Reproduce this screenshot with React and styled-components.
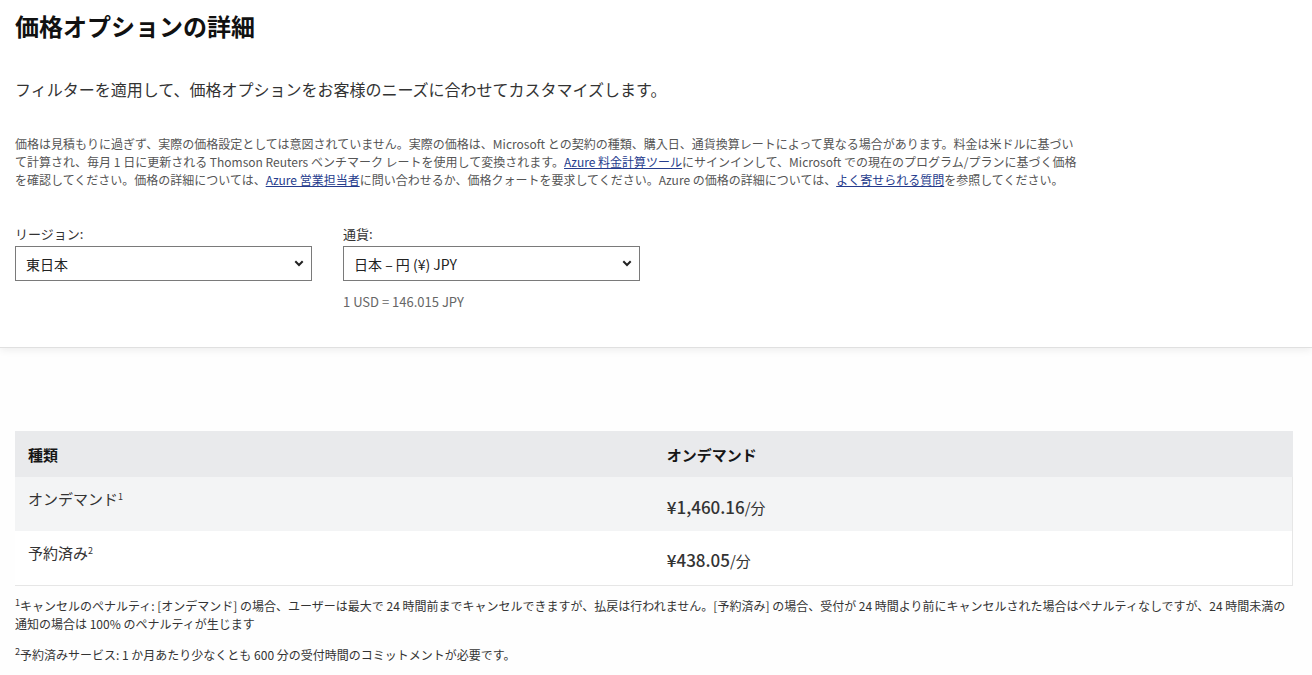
import styled, { createGlobalStyle } from "styled-components";

const Global = createGlobalStyle`
  html, body {
    margin: 0;
    padding: 0;
    background: #fefefe;
    font-family: "Noto Sans CJK JP", "Noto Sans", sans-serif;
    color: #333;
  }
`;

const Style = {
  TopSection: styled.section`
    background: #fff;
    padding: 8px 15px 36px;
    box-shadow: 0 1px 0 #e0e0e0, 0 3px 8px rgba(0, 0, 0, 0.07);
    position: relative;
  `,
  Title: styled.h1`
    margin: 0;
    font-size: 24px;
    line-height: 36px;
    font-weight: 700;
    color: #111;
  `,
  Lead: styled.p`
    margin: 33px 0 0;
    font-size: 16px;
    line-height: 24px;
    color: #333;
  `,
  Disclaimer: styled.p`
    margin: 34px 0 0;
    width: 1064px;
    font-size: 12px;
    line-height: 18px;
    color: #555;
  `,
  Link: styled.a`
    color: #263c8d;
    text-decoration: underline;
  `,
  Filters: styled.div`
    display: flex;
    gap: 31px;
    margin-top: 36px;
  `,
  Field: styled.div`
    width: 297px;
    display: flex;
    flex-direction: column;
  `,
  Label: styled.label`
    font-size: 13px;
    line-height: 18px;
    color: #333;
    margin-bottom: 3px;
  `,
  SelectBox: styled.div`
    position: relative;
    height: 35px;
    box-sizing: border-box;
    border: 1px solid #7a7a7a;
    background: #fff;
  `,
  Select: styled.select`
    appearance: none;
    width: 100%;
    height: 100%;
    border: 0;
    background: transparent;
    padding: 0 30px 0 10px;
    font-family: inherit;
    font-size: 14px;
    color: #222;
    outline: none;
  `,
  Chevron: styled.svg`
    position: absolute;
    right: 7px;
    top: 13px;
    pointer-events: none;
  `,
  Rate: styled.div`
    margin-top: 12px;
    font-size: 13px;
    line-height: 18px;
    color: #666;
  `,
  Main: styled.main`
    padding: 84px 19px 0 15px;
  `,
  Table: styled.table`
    width: 100%;
    border-collapse: collapse;
    table-layout: fixed;
  `,
  HeadCell: styled.th`
    background: #e9eaec;
    height: 46px;
    padding: 0 13px;
    text-align: left;
    font-size: 15px;
    font-weight: 700;
    color: #161616;
  `,
  Row: styled.tr`
    background: ${(p) => (p.$shaded ? "#f3f4f5" : "#fff")};
    border-bottom: ${(p) => (p.$last ? "1px solid #e6e6e6" : "0")};
  `,
  NameCell: styled.td`
    height: 54px;
    padding: 11px 13px 0;
    box-sizing: border-box;
    vertical-align: top;
    font-size: 15px;
    line-height: 22px;
    color: #333;
  `,
  PriceCell: styled.td`
    height: 54px;
    padding: 4px 13px 0;
    box-sizing: border-box;
    font-size: 16px;
    color: #333;
    border-right: 1px solid #e6e6e6;
  `,
  Price: styled.span`
    font-weight: 500;
    font-size: 17px;
  `,
  Unit: styled.span`
    font-size: 15px;
  `,
  Sup: styled.sup`
    font-size: 9px;
    line-height: 0;
    vertical-align: baseline;
    position: relative;
    top: -0.55em;
  `,
  Notes: styled.div`
    padding: 11px 15px 0;
  `,
  Note: styled.p`
    margin: 0 0 13px;
    font-size: 12px;
    line-height: 18px;
    color: #333;
  `,
};

const Chevron = () => (
  <Style.Chevron width="10" height="7" viewBox="0 0 10 7">
    <path d="M1.3 1.3 L5 5 L8.7 1.3" fill="none" stroke="#222" strokeWidth="2" />
  </Style.Chevron>
);

const rows = [
  { name: "オンデマンド", note: "1", price: "¥1,460.16" },
  { name: "予約済み", note: "2", price: "¥438.05" },
];

const App = () => {
  return (
    <>
      <Global />
      <Style.TopSection>
        <Style.Title>価格オプションの詳細</Style.Title>
        <Style.Lead>
          フィルターを適用して、価格オプションをお客様のニーズに合わせてカスタマイズします。
        </Style.Lead>
        <Style.Disclaimer>
          価格は見積もりに過ぎず、実際の価格設定としては意図されていません。実際の価格は、Microsoft
          との契約の種類、購入日、通貨換算レートによって異なる場合があります。料金は米ドルに基づいて計算され、毎月 1 日に更新される
          Thomson Reuters ベンチマーク レートを使用して変換されます。
          <Style.Link href="#">Azure 料金計算ツール</Style.Link>
          にサインインして、Microsoft での現在のプログラム/プランに基づく価格を確認してください。価格の詳細については、
          <Style.Link href="#">Azure 営業担当者</Style.Link>
          に問い合わせるか、価格クォートを要求してください。Azure の価格の詳細については、
          <Style.Link href="#">よく寄せられる質問</Style.Link>
          を参照してください。
        </Style.Disclaimer>
        <Style.Filters>
          <Style.Field>
            <Style.Label>リージョン:</Style.Label>
            <Style.SelectBox>
              <Style.Select defaultValue="japan-east">
                <option value="japan-east">東日本</option>
                <option value="japan-west">西日本</option>
              </Style.Select>
              <Chevron />
            </Style.SelectBox>
          </Style.Field>
          <Style.Field>
            <Style.Label>通貨:</Style.Label>
            <Style.SelectBox>
              <Style.Select defaultValue="jpy">
                <option value="jpy">日本 – 円 (¥) JPY</option>
                <option value="usd">米ドル ($) USD</option>
              </Style.Select>
              <Chevron />
            </Style.SelectBox>
            <Style.Rate>1 USD = 146.015 JPY</Style.Rate>
          </Style.Field>
        </Style.Filters>
      </Style.TopSection>
      <Style.Main>
        <Style.Table>
          <thead>
            <tr>
              <Style.HeadCell>種類</Style.HeadCell>
              <Style.HeadCell>オンデマンド</Style.HeadCell>
            </tr>
          </thead>
          <tbody>
            {rows.map((r, i) => (
              <Style.Row key={r.name} $shaded={i === 0} $last={i === rows.length - 1}>
                <Style.NameCell>
                  {r.name}
                  <Style.Sup>{r.note}</Style.Sup>
                </Style.NameCell>
                <Style.PriceCell>
                  <Style.Price>{r.price}</Style.Price>
                  <Style.Unit>/分</Style.Unit>
                </Style.PriceCell>
              </Style.Row>
            ))}
          </tbody>
        </Style.Table>
      </Style.Main>
      <Style.Notes>
        <Style.Note>
          <Style.Sup>1</Style.Sup>キャンセルのペナルティ: [オンデマンド] の場合、ユーザーは最大で 24
          時間前までキャンセルできますが、払戻は行われません。[予約済み] の場合、受付が 24
          時間より前にキャンセルされた場合はペナルティなしですが、24 時間未満の
          <wbr />
          通知の場合は 100% のペナルティが生じます
        </Style.Note>
        <Style.Note>
          <Style.Sup>2</Style.Sup>予約済みサービス: 1 か月あたり少なくとも 600
          分の受付時間のコミットメントが必要です。
        </Style.Note>
      </Style.Notes>
    </>
  );
};

export default App;
